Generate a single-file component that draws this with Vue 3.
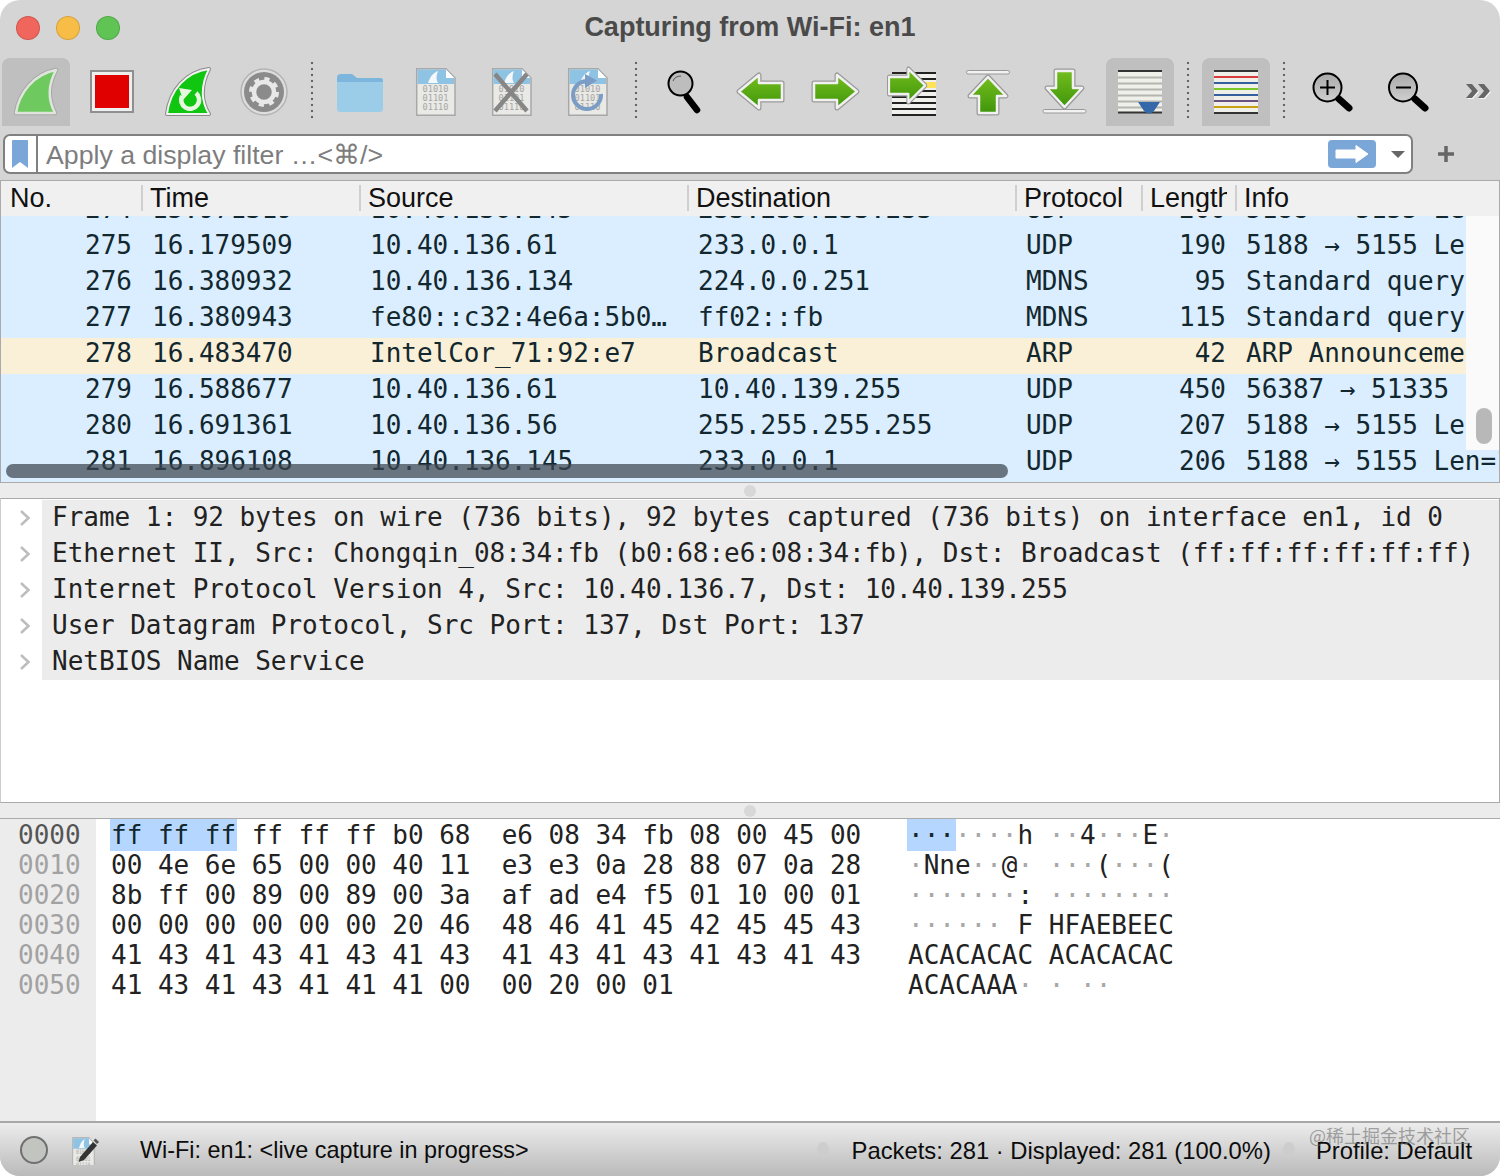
<script setup>
const arrows = [
  { id: 'arrow-left', d: 'M13 33.5 L33 17 V25 H56 V42 H33 V50 Z' },
  { id: 'arrow-right', d: 'M55 33.5 L35 17 V25 H12 V42 H35 V50 Z' },
  { id: 'arrow-up', d: 'M34 19 L52 38 H43 V55 H25 V38 H16 Z' },
  { id: 'arrow-down', d: 'M34.5 49 L52 30 H43 V13 H26 V30 H17 Z' },
]

const columns = ['No.', 'Time', 'Source', 'Destination', 'Protocol', 'Length', 'Info']

const packets = [
  { no: 274, time: '15.971319', src: '10.40.136.145', dst: '233.233.233.233', proto: 'UDP', len: 200, info: '5188 → 5155 Len=158' },
  { no: 275, time: '16.179509', src: '10.40.136.61', dst: '233.0.0.1', proto: 'UDP', len: 190, info: '5188 → 5155 Len=148' },
  { no: 276, time: '16.380932', src: '10.40.136.134', dst: '224.0.0.251', proto: 'MDNS', len: 95, info: 'Standard query 0x0000 PTR' },
  { no: 277, time: '16.380943', src: 'fe80::c32:4e6a:5b0…', dst: 'ff02::fb', proto: 'MDNS', len: 115, info: 'Standard query 0x0000 PTR' },
  { no: 278, time: '16.483470', src: 'IntelCor_71:92:e7', dst: 'Broadcast', proto: 'ARP', len: 42, info: 'ARP Announcement for 10.40.136.1', arp: true },
  { no: 279, time: '16.588677', src: '10.40.136.61', dst: '10.40.139.255', proto: 'UDP', len: 450, info: '56387 → 51335 Len=408' },
  { no: 280, time: '16.691361', src: '10.40.136.56', dst: '255.255.255.255', proto: 'UDP', len: 207, info: '5188 → 5155 Len=165' },
  { no: 281, time: '16.896108', src: '10.40.136.145', dst: '233.0.0.1', proto: 'UDP', len: 206, info: '5188 → 5155 Len=164' },
]

const details = [
  'Frame 1: 92 bytes on wire (736 bits), 92 bytes captured (736 bits) on interface en1, id 0',
  'Ethernet II, Src: Chongqin_08:34:fb (b0:68:e6:08:34:fb), Dst: Broadcast (ff:ff:ff:ff:ff:ff)',
  'Internet Protocol Version 4, Src: 10.40.136.7, Dst: 10.40.139.255',
  'User Datagram Protocol, Src Port: 137, Dst Port: 137',
  'NetBIOS Name Service',
]

const hexRows = [
  { off: '0000', hexSel: 'ff ff ff', hex: ' ff ff ff b0 68  e6 08 34 fb 08 00 45 00', asciiSel: '···', ascii: '····h ··4···E·' },
  { off: '0010', hex: '00 4e 6e 65 00 00 40 11  e3 e3 0a 28 88 07 0a 28', ascii: '·Nne··@· ···(···(' },
  { off: '0020', hex: '8b ff 00 89 00 89 00 3a  af ad e4 f5 01 10 00 01', ascii: '·······: ········' },
  { off: '0030', hex: '00 00 00 00 00 00 20 46  48 46 41 45 42 45 45 43', ascii: '······ F HFAEBEEC' },
  { off: '0040', hex: '41 43 41 43 41 43 41 43  41 43 41 43 41 43 41 43', ascii: 'ACACACAC ACACACAC' },
  { off: '0050', hex: '41 43 41 43 41 41 41 00  00 20 00 01', ascii: 'ACACAAA· · ··' },
]
</script>

<template>
  <div class="window">
    <svg class="defs" width="0" height="0" aria-hidden="true">
      <defs>
        <linearGradient id="green" x1="0" y1="0" x2="0" y2="1">
          <stop offset="0" stop-color="#74bd1e" />
          <stop offset="1" stop-color="#3f960a" />
        </linearGradient>
        <linearGradient id="lens" x1="0" y1="0" x2="0" y2="1">
          <stop offset="0" stop-color="#a9a9a9" />
          <stop offset="1" stop-color="#cfcfcf" />
        </linearGradient>
        <g v-for="a in arrows" :id="a.id" :key="a.id">
          <path :d="a.d" fill="#eee" stroke="#9a9a9a" stroke-width="5" stroke-linejoin="round" />
          <path :d="a.d" fill="url(#green)" stroke="#f1f1f1" stroke-width="2.5" stroke-linejoin="round" />
        </g>
        <g id="capfile">
          <path d="M14.7 10.7 H44 L53 20 V57.3 H14.7 Z" fill="#e9e9e5" stroke="#a8a8a8" stroke-width="1.5" />
          <path d="M15.5 11.5 H44 L52 20 V26 H15.5 Z" fill="#8fc3e4" />
          <path d="M26 25 C28 19 31 15 36 13 C34 18 34 22 36 25 Z" fill="#f4f8fb" />
          <path d="M44 11.5 L52.3 20 H44 Z" fill="#fff" />
          <text x="33.5" y="34" class="bits">01010</text>
          <text x="33.5" y="43" class="bits">01101</text>
          <text x="33.5" y="52" class="bits">01110</text>
        </g>
      </defs>
    </svg>

    <div class="titlebar">
      <div class="lights">
        <span class="light red"></span>
        <span class="light yellow"></span>
        <span class="light green"></span>
      </div>
      <div class="title">Capturing from Wi-Fi: en1</div>
    </div>

    <div class="toolbar">
      <div class="tool active">
        <svg viewBox="0 0 68 68">
          <path d="M14 55 C17 35 32 16 54 12 C46 27 46 42 53 55 Z" fill="#6ec95f" stroke="#a8a8a8" stroke-width="4.5" stroke-linejoin="round" />
          <path d="M14 55 C17 35 32 16 54 12 C46 27 46 42 53 55 Z" fill="#6ec95f" stroke="#dfe5dd" stroke-width="2.5" stroke-linejoin="round" />
        </svg>
      </div>
      <div class="tool">
        <svg viewBox="0 0 68 68">
          <rect x="13" y="13" width="42" height="41" fill="#efefef" stroke="#8f8f8f" stroke-width="2" />
          <rect x="17" y="17" width="34" height="33" fill="#e00000" />
        </svg>
      </div>
      <div class="tool">
        <svg viewBox="0 0 68 68">
          <path d="M13 56 C16 32 32 14 55 11 C47 27 47 43 55 56 Z" fill="#10c610" stroke="#8a8a8a" stroke-width="4" stroke-linejoin="round" />
          <path d="M13 56 C16 32 32 14 55 11 C47 27 47 43 55 56 Z" fill="#10c610" stroke="#f2f2f2" stroke-width="2" stroke-linejoin="round" />
          <path d="M42 35 A9 9 0 1 1 28 38" fill="none" stroke="#e8f8e0" stroke-width="4.5" />
          <path d="M25 30 L38 32 L29 42 Z" fill="#e8f8e0" />
        </svg>
      </div>
      <div class="tool">
        <svg viewBox="0 0 68 68">
          <circle cx="34" cy="34" r="23" fill="#dedede" stroke="#b4b4b4" stroke-width="1.5" />
          <circle cx="34" cy="34" r="20" fill="#8b8b8b" />
          <circle cx="34" cy="34" r="13" fill="none" stroke="#e8e8e8" stroke-width="4" stroke-dasharray="5 5.21" />
          <circle cx="34" cy="34" r="10" fill="none" stroke="#e8e8e8" stroke-width="4.5" />
        </svg>
      </div>
      <div class="sep"></div>
      <div class="tool">
        <svg viewBox="0 0 68 68">
          <path d="M11 20 Q11 16 15 16 H26 L31 20 H55 Q57 20 57 23 V30 H11 Z" fill="#7db6dd" />
          <path d="M11 24 H57 V51 Q57 54 54 54 H14 Q11 54 11 51 Z" fill="#9ccde8" />
        </svg>
      </div>
      <div class="tool">
        <svg viewBox="0 0 68 68"><use href="#capfile" /></svg>
      </div>
      <div class="tool">
        <svg viewBox="0 0 68 68">
          <use href="#capfile" />
          <path d="M17 16 L49 53 M49 16 L17 53" stroke="#868686" stroke-width="4.5" />
        </svg>
      </div>
      <div class="tool">
        <svg viewBox="0 0 68 68">
          <use href="#capfile" />
          <path d="M33 23 A14 14 0 1 0 47 36" fill="none" stroke="#7b9cc4" stroke-width="4" />
          <path d="M31 16 L43 22.5 L31 30 Z" fill="#7b9cc4" />
        </svg>
      </div>
      <div class="sep"></div>
      <div class="tool">
        <svg viewBox="0 0 68 68">
          <circle cx="30.5" cy="25.5" r="12" fill="#bdbdbd" stroke="#000" stroke-width="2" />
          <path d="M23 23 Q25 18 31 18" fill="none" stroke="#555" stroke-width="1" />
          <path d="M37 39 L47 52" stroke="#000" stroke-width="6.5" stroke-linecap="round" />
        </svg>
      </div>
      <div class="tool">
        <svg viewBox="0 0 68 68"><use href="#arrow-left" /></svg>
      </div>
      <div class="tool">
        <svg viewBox="0 0 68 68"><use href="#arrow-right" /></svg>
      </div>
      <div class="tool">
        <svg viewBox="0 0 68 68">
          <rect x="14" y="14" width="44" height="44" fill="#f0f0ec" />
          <path d="M14 15 H58 M14 21 H58 M14 33 H58 M14 39 H58 M14 45 H58 M14 51 H58 M14 57 H58" stroke="#222" stroke-width="2" />
          <rect x="46" y="24" width="12" height="6" fill="#ffe25c" />
          <use href="#arrow-right" transform="translate(1 -6) scale(.84 1)" />
        </svg>
      </div>
      <div class="tool">
        <svg viewBox="0 0 68 68">
          <rect x="12.5" y="12.5" width="43" height="3.5" rx="1.7" fill="#f2f2f2" stroke="#999" />
          <use href="#arrow-up" />
        </svg>
      </div>
      <div class="tool">
        <svg viewBox="0 0 68 68">
          <use href="#arrow-down" />
          <rect x="13" y="51.5" width="43" height="3.5" rx="1.7" fill="#f2f2f2" stroke="#999" />
        </svg>
      </div>
      <div class="tool active">
        <svg viewBox="0 0 68 68">
          <rect x="12" y="12" width="44" height="43" fill="#f0f0ea" />
          <path d="M12 13 H56" stroke="#333" stroke-width="2" />
          <path d="M12 19.5 H56 M12 25.5 H56 M12 31.5 H56 M12 37.5 H56 M12 43.5 H56 M12 49.5 H56" stroke="#b4b4b0" stroke-width="2" />
          <path d="M12 54.5 H56" stroke="#333" stroke-width="2" />
          <path d="M32 44 H54 L48 53 Q43 58 38 53 Z" fill="#3468a8" />
        </svg>
      </div>
      <div class="sep"></div>
      <div class="tool active">
        <svg viewBox="0 0 68 68">
          <rect x="12" y="12" width="44" height="43" fill="#f0f0ea" />
          <path d="M12 13 H56" stroke="#333" stroke-width="2" />
          <path d="M12 19 H56" stroke="#d93a3a" stroke-width="2" />
          <path d="M12 25 H56" stroke="#34609f" stroke-width="2" />
          <path d="M12 31 H56" stroke="#78c828" stroke-width="2" />
          <path d="M12 37 H56" stroke="#34609f" stroke-width="2" />
          <path d="M12 43 H56" stroke="#6a4f80" stroke-width="2" />
          <path d="M12 49 H56" stroke="#c8a010" stroke-width="2" />
          <path d="M12 55 H56" stroke="#333" stroke-width="2" />
        </svg>
      </div>
      <div class="sep"></div>
      <div class="tool">
        <svg viewBox="0 0 68 68">
          <circle cx="29.5" cy="29.5" r="14" fill="url(#lens)" stroke="#000" stroke-width="2" />
          <path d="M29.5 22 V37 M22 29.5 H37" stroke="#000" stroke-width="2" />
          <path d="M41 41 L51 50" stroke="#000" stroke-width="7" stroke-linecap="round" />
        </svg>
      </div>
      <div class="tool">
        <svg viewBox="0 0 68 68">
          <circle cx="29" cy="29.5" r="14" fill="url(#lens)" stroke="#000" stroke-width="2" />
          <path d="M22 29.5 H37" stroke="#000" stroke-width="2" />
          <path d="M41 41 L51 50" stroke="#000" stroke-width="7" stroke-linecap="round" />
        </svg>
      </div>
      <svg class="more" viewBox="0 0 28 17">
        <path d="M1 1 H7 L13 8 L7 15 H1 L7 8 Z M13 1 H19 L25 8 L19 15 H13 L19 8 Z" transform="translate(1 1)" fill="#f5f5f5" />
        <path d="M1 1 H7 L13 8 L7 15 H1 L7 8 Z M13 1 H19 L25 8 L19 15 H13 L19 8 Z" fill="#666" />
      </svg>
    </div>

    <div class="filterbar">
      <div class="filter">
        <div class="bookmark">
          <svg width="16" height="28" viewBox="0 0 16 28">
            <path d="M0 1 Q0 0 1 0 H15 Q16 0 16 1 V28 L8 22 L0 28 Z" fill="#7ba7d8" />
          </svg>
        </div>
        <div class="filter-text">Apply a display filter …&lt;⌘/&gt;</div>
        <div class="apply">
          <svg width="34" height="18" viewBox="0 0 34 18">
            <path d="M1 5 H21 V0.5 L33 9 L21 17.5 V13 H1 Z" fill="#fff" stroke="#fff" stroke-linejoin="round" />
          </svg>
        </div>
        <span class="caret"></span>
      </div>
      <div class="plus">
        <svg width="16" height="16" viewBox="0 0 16 16">
          <path d="M8 0 V16 M0 8 H16" stroke="#666" stroke-width="3.5" />
        </svg>
      </div>
    </div>

    <section class="packets">
      <div class="cols head">
        <div v-for="c in columns" :key="c" class="hcell"><span>{{ c }}</span></div>
      </div>
      <div class="rows">
        <div class="rows-inner">
          <div v-for="p in packets" :key="p.no" class="cols row" :class="{ arp: p.arp }">
            <div class="cell num">{{ p.no }}</div>
            <div class="cell">{{ p.time }}</div>
            <div class="cell">{{ p.src }}</div>
            <div class="cell">{{ p.dst }}</div>
            <div class="cell">{{ p.proto }}</div>
            <div class="cell num">{{ p.len }}</div>
            <div class="cell">{{ p.info }}</div>
          </div>
        </div>
        <div class="vtrack"><span class="vthumb"></span></div>
        <div class="hthumb"></div>
      </div>
    </section>

    <div class="splitter"><span></span></div>

    <section class="details">
      <div v-for="d in details" :key="d" class="detail">
        <div class="gutter">
          <svg width="12" height="18" viewBox="0 0 12 18">
            <path d="M2 2 L9.5 9 L2 16" fill="none" stroke="#bdbdbd" stroke-width="2.5" />
          </svg>
        </div>
        <div class="detail-text">{{ d }}</div>
      </div>
    </section>

    <div class="splitter"><span></span></div>

    <section class="hex">
      <div class="offsets">
        <div v-for="(r, i) in hexRows" :key="r.off" class="off" :class="{ first: i === 0 }">{{ r.off }}</div>
      </div>
      <div class="hexcol">
        <div v-for="r in hexRows" :key="r.off" class="hexrow"><span v-if="r.hexSel" class="sel">{{ r.hexSel }}</span>{{ r.hex }}</div>
      </div>
      <div class="asciicol">
        <div v-for="r in hexRows" :key="r.off" class="hexrow"><span v-if="r.asciiSel" class="sel">{{ r.asciiSel }}</span><span v-for="(c, i) in [...r.ascii]" :key="i" :class="{ dot: c === '·' }">{{ c }}</span></div>
      </div>
    </section>

    <footer class="status">
      <span class="led"></span>
      <svg class="note" width="28" height="30" viewBox="0 0 28 30">
        <use href="#capfile" transform="translate(-6.5 -5) scale(.56 .72)" />
        <path d="M9 22 L22 7 L26 10.5 L13 25 L7.5 27 Z" fill="#333" />
        <path d="M22.5 5.5 L24.5 3.5 L28 7 L26 9 Z" fill="#555" />
      </svg>
      <span class="status-text capture">Wi-Fi: en1: &lt;live capture in progress&gt;</span>
      <span class="grip"></span>
      <span class="status-text packets-count">Packets: 281 · Displayed: 281 (100.0%)</span>
      <span class="grip"></span>
      <span class="status-text profile">Profile: Default</span>
      <span class="watermark">@稀土掘金技术社区</span>
    </footer>
  </div>
</template>

<style>
html, body {
  margin: 0;
  background: #fff;
}
</style>

<style scoped>
.window {
  position: relative;
  display: flex;
  flex-direction: column;
  width: 1500px;
  height: 1176px;
  overflow: hidden;
  border-radius: 20px;
  background: #d5d5d5;
  font-family: "Liberation Sans", Arial, sans-serif;
  color: #000;
}
.defs {
  position: absolute;
}
.bits {
  font: 8.6px "DejaVu Sans Mono", monospace;
  fill: #a6a6a6;
  text-anchor: middle;
}

.titlebar {
  position: relative;
  height: 54px;
  display: flex;
  align-items: center;
  justify-content: center;
}
.lights {
  position: absolute;
  left: 16px;
  top: 16px;
  display: flex;
  gap: 16px;
}
.light {
  width: 24px;
  height: 24px;
  border-radius: 50%;
  box-sizing: border-box;
  border: 1px solid rgba(0, 0, 0, .14);
}
.red { background: #f0665c; }
.yellow { background: #f8bd46; }
.green { background: #5fc454; }
.title {
  font-size: 27px;
  font-weight: 700;
  color: #4a4a4a;
}

.toolbar {
  display: flex;
  gap: 8px;
  padding: 4px 0 0 2px;
  height: 68px;
}
.tool {
  width: 68px;
  height: 68px;
  flex: none;
  border-radius: 8px 8px 0 0;
}
.tool svg {
  display: block;
  width: 68px;
  height: 68px;
}
.tool.active {
  background: #bfbfbf;
}
.sep {
  width: 12px;
  flex: none;
  height: 62px;
  margin-top: 2px;
  background: radial-gradient(circle at 50% 50%, #666 1.2px, transparent 1.6px) 0 0 / 12px 6px repeat-y;
}
.more {
  width: 28px;
  height: 17px;
  margin: 25px 0 0 15px;
  flex: none;
}

.filterbar {
  display: flex;
  align-items: center;
  margin-top: 8px;
  padding-left: 3px;
  height: 40px;
}
.filter {
  width: 1410px;
  height: 40px;
  box-sizing: border-box;
  display: flex;
  align-items: center;
  background: #fff;
  border: 2px solid #808080;
  border-radius: 7px;
}
.bookmark {
  width: 33px;
  height: 100%;
  box-sizing: border-box;
  display: flex;
  align-items: center;
  padding-left: 7px;
  border-right: 2px solid #808080;
}
.bookmark svg {
  display: block;
}
.filter-text {
  flex: 1;
  padding: 1px 0 0 8px;
  font-size: 26.7px;
  color: #7d7d7d;
  white-space: nowrap;
}
.apply {
  width: 48px;
  height: 28px;
  display: flex;
  align-items: center;
  justify-content: center;
  background: #7ba7d8;
  border-radius: 4px;
}
.caret {
  width: 0;
  height: 0;
  margin: 0 6px 0 15px;
  border-left: 7px solid transparent;
  border-right: 7px solid transparent;
  border-top: 7px solid #666;
}
.plus {
  margin-left: 25px;
  display: flex;
}

.packets {
  margin-top: 6px;
  border: 1px solid #aaa;
  background: #daeeff;
}
.cols {
  display: grid;
  grid-template-columns: 140px 218px 328px 328px 126px 94px 1fr;
}
.head {
  height: 35px;
  background: #f0f0f0;
}
.hcell {
  padding: 0 8px 0 9px;
  font-size: 27px;
  line-height: 35px;
  white-space: nowrap;
  color: #111;
}
.hcell span {
  display: block;
  overflow: hidden;
}
.hcell + .hcell {
  border-left: 2px solid #cfcfcf;
  padding-left: 7px;
  height: 26px;
  margin-top: 4px;
  line-height: 27px;
}
.rows {
  position: relative;
  height: 266px;
  overflow: hidden;
}
.rows-inner {
  margin-top: -22px;
}
.row {
  height: 36px;
  font: 26px/30px "DejaVu Sans Mono", monospace;
  letter-spacing: -.025px;
  color: #12272e;
  background: #daeeff;
  white-space: nowrap;
}
.row.arp {
  background: #faf0d7;
}
.cell {
  padding-left: 11px;
  overflow: hidden;
}
.cell.num {
  padding: 0 9px 0 0;
  text-align: right;
}
.vtrack {
  position: absolute;
  right: 0;
  top: 0;
  width: 33px;
  height: 234px;
  background: #fafafa;
}
.vthumb {
  position: absolute;
  left: 10px;
  top: 192px;
  width: 16px;
  height: 36px;
  border-radius: 8px;
  background: #b8b8b8;
}
.hthumb {
  position: absolute;
  left: 5px;
  top: 248px;
  width: 1002px;
  height: 14px;
  border-radius: 7px;
  background: rgba(60, 70, 80, .72);
}

.splitter {
  height: 15px;
  display: flex;
  align-items: center;
  justify-content: center;
  background: #ececec;
}
.splitter span {
  width: 12px;
  height: 12px;
  border-radius: 50%;
  background: #d8d8d8;
}

.details {
  height: 305px;
  box-sizing: border-box;
  padding-top: 1px;
  border: 1px solid #aaa;
  border-left-color: #ccc;
  background: #fff;
}
.detail {
  display: flex;
  height: 36px;
  font: 26px/34px "DejaVu Sans Mono", monospace;
  letter-spacing: -.025px;
  color: #222;
  white-space: nowrap;
}
.gutter {
  width: 41px;
  flex: none;
  display: flex;
  align-items: center;
  padding-left: 18px;
  box-sizing: border-box;
}
.detail-text {
  flex: 1;
  padding-left: 10px;
  background: #ececec;
}

.hex {
  flex: 1;
  display: flex;
  min-height: 0;
  border-top: 1px solid #aaa;
  background: #fff;
  font: 26px/30px "DejaVu Sans Mono", monospace;
  letter-spacing: -.025px;
  color: #222;
  white-space: pre;
}
.offsets {
  width: 78px;
  padding: 1px 0 0 18px;
  background: #ececec;
  color: #a2a2a2;
}
.off.first {
  color: #555;
}
.hexcol {
  width: 797px;
  padding: 1px 0 0 15px;
}
.asciicol {
  padding-top: 1px;
}
.hexrow {
  height: 30px;
}
.sel {
  background: #b5d7ff;
  color: #12272e;
  padding: 1px 1px;
  margin: 0 -1px;
}
.dot {
  color: #a8a8a8;
}

.status {
  position: relative;
  height: 55px;
  display: flex;
  align-items: center;
  border-top: 2px solid #a8a8a8;
  box-sizing: border-box;
  background: linear-gradient(#ececec, #bababa);
}
.led {
  width: 28px;
  height: 28px;
  margin-left: 20px;
  flex: none;
  box-sizing: border-box;
  border-radius: 50%;
  border: 2px solid #707070;
  background: #c2c4c0;
}
.note {
  margin-left: 23px;
  flex: none;
}
.status-text {
  font-size: 23.8px;
  margin-top: 2px;
  color: #0c0c0c;
  white-space: nowrap;
}
.capture {
  margin-left: 41px;
  flex: 1;
  font-size: 23.4px;
}
.grip {
  width: 12px;
  height: 16px;
  flex: none;
  border-radius: 50%;
  background: #cdcdcd;
}
.packets-count {
  margin: 2px 12px 0 23px;
}
.profile {
  margin: 2px 28px 0 21px;
}
.watermark {
  position: absolute;
  left: 1309px;
  top: -1px;
  font: 18px/26px "Noto Sans CJK SC", sans-serif;
  color: rgba(110, 110, 110, .6);
}
</style>
